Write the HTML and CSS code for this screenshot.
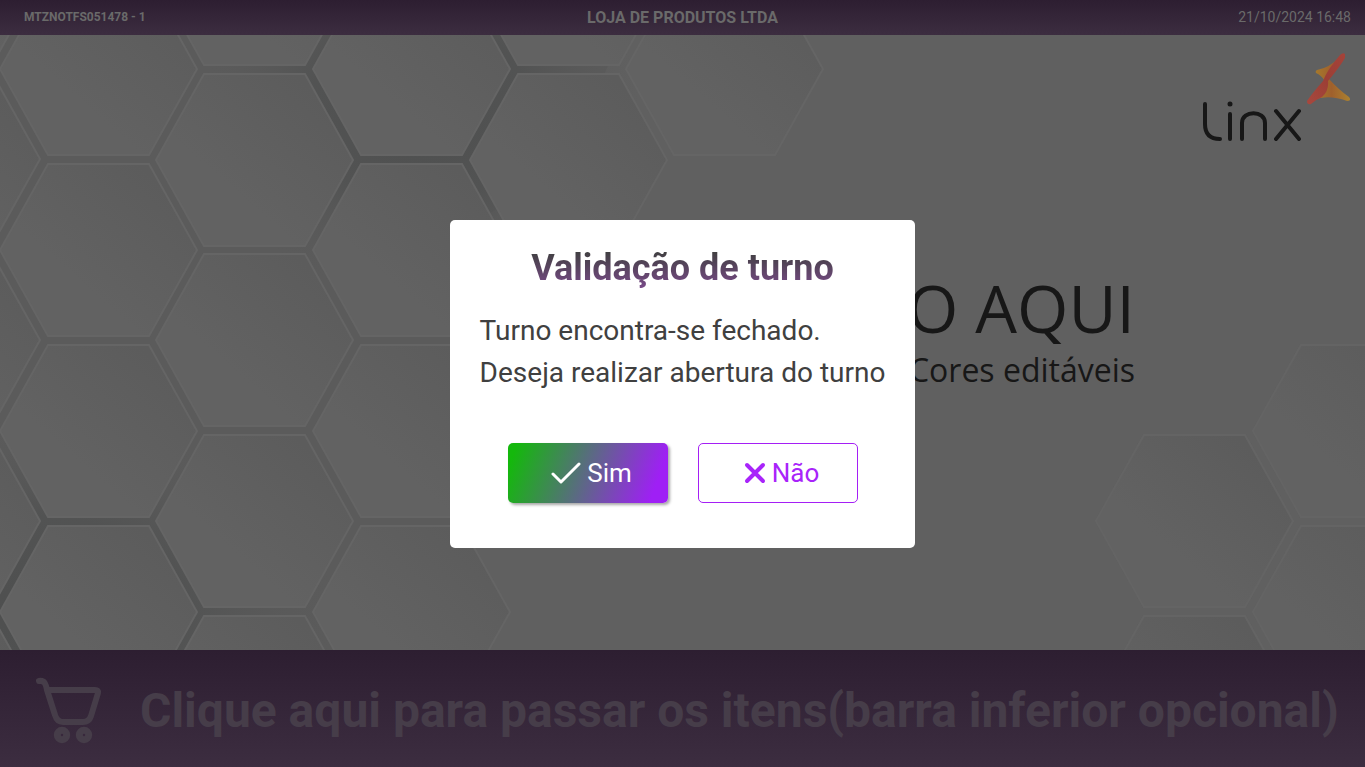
FILE: index.html
```html
<!DOCTYPE html>
<html lang="pt-BR">
<head>
<meta charset="utf-8">
<meta name="viewport" content="width=device-width, initial-scale=1">
<title>Validação de turno</title>
<link rel="stylesheet" href="styles.css">
</head>
<body>
<div class="screen">
  <header class="topbar">
    <span class="terminal">MTZNOTFS051478 - 1</span>
    <strong class="store">LOJA DE PRODUTOS LTDA</strong>
    <time class="clock" datetime="2024-10-21T16:48">21/10/2024 16:48</time>
  </header>

  <main class="stage">
    <svg class="pattern" viewBox="0 35 1365 615" preserveAspectRatio="xMidYMid slice" aria-hidden="true">
      <defs>
        <linearGradient id="cell" x1="0.15" y1="0.85" x2="0.85" y2="0.15">
          <stop offset="0.3" stop-color="#626262"/>
          <stop offset="1" stop-color="#5c5c5c"/>
        </linearGradient>
        <radialGradient id="shade">
          <stop offset="0" stop-color="#4e4f4f"/>
          <stop offset="0.5" stop-color="#505151" stop-opacity="0.8"/>
          <stop offset="1" stop-color="#5a5a5a" stop-opacity="0"/>
        </radialGradient>
        <path id="hex" d="M-98 0-50-86H51L99 0 51 86H-50Z" fill="url(#cell)" stroke="#656565" stroke-width="2"/>
      </defs>
      <rect y="35" width="1365" height="615" fill="#606060"/>
      <path d="M0 35H620L570 160 450 240 450 548 480 650H0Z" fill="#5b5b5b"/>
      <ellipse cx="420" cy="110" rx="220" ry="190" fill="url(#shade)"/>
      <ellipse cx="30" cy="610" rx="310" ry="190" fill="url(#shade)"/>
      <use href="#hex" x="-59" y="-21"/><use href="#hex" x="-59" y="159"/><use href="#hex" x="-59" y="340"/><use href="#hex" x="-59" y="521"/><use href="#hex" x="-59" y="702"/>
      <use href="#hex" x="98" y="69"/><use href="#hex" x="98" y="250"/><use href="#hex" x="98" y="431"/><use href="#hex" x="98" y="612"/>
      <use href="#hex" x="254" y="-21"/><use href="#hex" x="254" y="160"/><use href="#hex" x="254" y="340"/><use href="#hex" x="254" y="521"/><use href="#hex" x="254" y="702"/>
      <use href="#hex" x="411" y="69"/><use href="#hex" x="411" y="250"/><use href="#hex" x="411" y="431"/><use href="#hex" x="411" y="612"/>
      <use href="#hex" x="568" y="-21"/><use href="#hex" x="568" y="160"/>
      <use href="#hex" x="724" y="69"/>
      <g opacity="0.9">
        <use href="#hex" x="1194" y="521"/><use href="#hex" x="1194" y="702"/>
        <use href="#hex" x="1351" y="431"/><use href="#hex" x="1351" y="612"/>
      </g>
    </svg>

    <svg class="brand" viewBox="0 0 150 90" role="img" aria-label="Linx">
      <defs>
        <linearGradient id="gold" x1="0" y1="0" x2="1" y2="0">
          <stop offset="0.1" stop-color="#a5772c"/>
          <stop offset="0.5" stop-color="#a0602c"/>
          <stop offset="1" stop-color="#ab8230"/>
        </linearGradient>
        <linearGradient id="red" x1="1" y1="0" x2="0" y2="1">
          <stop offset="0" stop-color="#a5433a"/>
          <stop offset="0.5" stop-color="#9c3f35"/>
          <stop offset="1" stop-color="#a8483e"/>
        </linearGradient>
      </defs>
      <path d="M5 51V71Q5 86 20 86M30 61V86M42 86V70C42 57 65 57 65 70V86M76 58 99 86M99 58 76 86" fill="none" stroke="#171717" stroke-width="4" stroke-linecap="round" stroke-linejoin="round"/>
      <circle cx="30" cy="51" r="2.500" fill="#171717"/>
      <path d="M117 17Q129 15 140 4L129 26Q139 37 149 44Q152 48 147 48Q128 41 113 47L125 28Q121 22 116 20Q115 18 117 17Z" fill="url(#gold)"/>
      <path d="M140 2Q143-1 145 1V5Q139 15 128 28Q129 38 122 44Q117 46 111 51Q107 52 107 48Q111 42 117 35L123 28Q127 17 140 2Z" fill="url(#red)"/>
    </svg>

    <div class="banner">
      <p class="banner-title">O AQUI</p>
      <p class="banner-note">Cores editáveis</p>
    </div>
  </main>

  <button class="start" type="button">
    <svg class="cart" viewBox="0 0 68 68" fill="none" stroke="currentColor" stroke-width="6" stroke-linecap="round" stroke-linejoin="round" aria-hidden="true">
      <path d="M4 4C10 3 11 8 12 13L20 38Q22 45 28 45H48Q54 45 56 39L63 16Q64 13 60 13H15"/>
      <circle cx="27" cy="58" r="4.700" stroke-width="7"/>
      <circle cx="49" cy="58" r="4.700" stroke-width="7"/>
    </svg>
    <span class="start-label">Clique aqui para passar os itens(barra inferior opcional)</span>
  </button>
</div>

<div class="backdrop">
  <section class="dialog" role="dialog" aria-modal="true" aria-labelledby="dialog-title" aria-describedby="dialog-text">
    <h1 class="dialog-title" id="dialog-title">Validação de turno</h1>
    <p class="dialog-text" id="dialog-text">Turno encontra-se fechado.<br>Deseja realizar abertura do turno</p>
    <div class="actions">
      <button class="action action-yes" type="button">
        <svg class="icon-check" viewBox="0 0 30 22" fill="none" stroke="currentColor" stroke-width="3" stroke-linecap="round" stroke-linejoin="round" aria-hidden="true"><path d="M2 12 10 20 28 2"/></svg>
        Sim
      </button>
      <button class="action action-no" type="button">
        <svg class="icon-cross" viewBox="0 0 22 22" fill="none" stroke="currentColor" stroke-width="4" stroke-linecap="round" aria-hidden="true"><path d="M3 3 19 19M19 3 3 19"/></svg>
        Não
      </button>
    </div>
  </section>
</div>
</body>
</html>
```

FILE: styles.css
```css
* {
  box-sizing: border-box;
}

body {
  margin: 0;
  font-family: Roboto, "Liberation Sans", sans-serif;
}

p,
h1 {
  margin: 0;
}

.screen {
  display: flex;
  flex-direction: column;
  min-height: 100vh;
}

.topbar {
  display: grid;
  grid-template-columns: 1fr auto 1fr;
  align-items: center;
  padding: 8px 14px;
  background: linear-gradient(#2d1e31, #3c2d40);
  color: #6a6a6a;
  line-height: 19px;
}

.terminal {
  padding-left: 10px;
  font-size: 12px;
  font-weight: 700;
}

.store {
  font-size: 16px;
}

.clock {
  justify-self: end;
  font-size: 14px;
}

.stage {
  position: relative;
  flex: 1;
  display: flex;
  flex-direction: column;
  align-items: flex-end;
  overflow: hidden;
  background: #606060;
}

.pattern {
  position: absolute;
  inset: 0;
  width: 100%;
  height: 100%;
}

.brand {
  position: relative;
  width: 150px;
  height: 90px;
  margin: 18px 15px 0 0;
}

.banner {
  position: relative;
  margin: 119px 230px 0 0;
  color: #171717;
  font-family: "Open Sans", "Noto Sans", sans-serif;
  text-align: right;
}

.banner-title {
  font-size: 66px;
  line-height: 90px;
}

.banner-note {
  font-size: 32px;
  line-height: 36px;
}

.start {
  display: flex;
  align-items: center;
  gap: 37px;
  min-height: 117px;
  padding: 4px 24px 0 35px;
  border: 0;
  background: linear-gradient(#2d1e31, #3c2d40);
  color: #463d49;
  font-family: inherit;
  font-size: 48px;
  font-weight: 700;
  text-align: left;
}

.cart {
  flex: none;
  width: 68px;
  height: 68px;
}

.backdrop {
  position: fixed;
  inset: 0;
  display: flex;
  align-items: center;
  justify-content: center;
}

.dialog {
  padding: 27px 30px 45px;
  border-radius: 5px;
  background: #fff;
  color: #404040;
}

.dialog-title {
  background: linear-gradient(#404040 10%, #7a4a8a);
  background-clip: text;
  -webkit-background-clip: text;
  color: transparent;
  font-size: 36px;
  line-height: 42px;
  text-align: center;
}

.dialog-text {
  margin-top: 21px;
  font-size: 28px;
  line-height: 42px;
}

.actions {
  display: flex;
  justify-content: center;
  gap: 30px;
  margin-top: 49px;
}

.action {
  display: flex;
  align-items: center;
  justify-content: center;
  gap: 6px;
  width: 160px;
  height: 60px;
  padding: 0 0 0 8px;
  border: 1px solid #a51ff5;
  border-radius: 5px;
  font-family: inherit;
  font-size: 26px;
}

.action-yes {
  border: 0;
  background: linear-gradient(110deg, #14b80c 5%, #9f1ff5 90%);
  box-shadow: 2px 2px 3px rgba(0, 0, 0, 0.35);
  color: #fff;
}

.action-no {
  background: #fff;
  color: #a824fa;
}

.icon-check {
  width: 30px;
  height: 22px;
}

.icon-cross {
  width: 22px;
  height: 22px;
}
```
